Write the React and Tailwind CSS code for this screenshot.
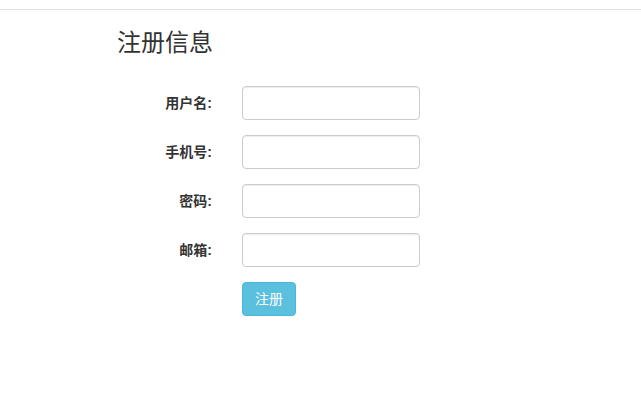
export default function App() {
  const fields = ["用户名:", "手机号:", "密码:", "邮箱:"]

  return (
    <div
      className="min-h-screen bg-white text-[#333]"
      style={{ fontFamily: '"Liberation Sans", "Noto Sans CJK SC", sans-serif' }}
    >
      {/* top bar edge */}
      <div className="h-[10px] border-b border-[#e2e2e2]" />

      <div className="pl-[117px]">
        <h3 className="mt-[19px] text-[24px] leading-[28px] font-normal">注册信息</h3>
      </div>

      <form className="mt-[29px] flex flex-col gap-[15px] pl-[150px]">
        {fields.map((label) => (
          <div key={label} className="flex items-center gap-[30px]">
            <label className="w-[62px] text-right text-[14px] font-bold leading-5">{label}</label>
            <input
              type="text"
              className="w-[178px] h-[34px] rounded-[4px] border border-[#ccc] px-3 text-[14px] shadow-[inset_0_1px_1px_rgba(0,0,0,0.075)] outline-none"
            />
          </div>
        ))}

        <div className="flex pl-[92px]">
          <button
            type="button"
            className="h-[34px] px-3 rounded-[4px] border border-[#46b8da] bg-[#5bc0de] text-white text-[14px] leading-5"
          >
            注册
          </button>
        </div>
      </form>
    </div>
  )
}
